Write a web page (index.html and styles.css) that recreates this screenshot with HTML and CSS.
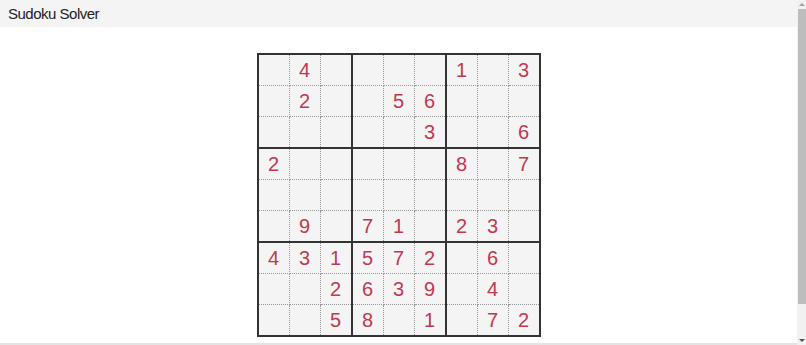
FILE: index.html
```html
<!DOCTYPE html>
<html lang="en">
<head>
	<meta charset="UTF-8">
	<title>Sudoku Solver</title>
	<link rel="stylesheet" href="styles.css">
</head>
<body>
	<div id="header">Sudoku Solver</div>

	<table id="board">
		<tr><td></td><td>4</td><td></td><td></td><td></td><td></td><td>1</td><td></td><td>3</td></tr>
		<tr><td></td><td>2</td><td></td><td></td><td>5</td><td>6</td><td></td><td></td><td></td></tr>
		<tr><td></td><td></td><td></td><td></td><td></td><td>3</td><td></td><td></td><td>6</td></tr>
		<tr><td>2</td><td></td><td></td><td></td><td></td><td></td><td>8</td><td></td><td>7</td></tr>
		<tr><td></td><td></td><td></td><td></td><td></td><td></td><td></td><td></td><td></td></tr>
		<tr><td></td><td>9</td><td></td><td>7</td><td>1</td><td></td><td>2</td><td>3</td><td></td></tr>
		<tr><td>4</td><td>3</td><td>1</td><td>5</td><td>7</td><td>2</td><td></td><td>6</td><td></td></tr>
		<tr><td></td><td></td><td>2</td><td>6</td><td>3</td><td>9</td><td></td><td>4</td><td></td></tr>
		<tr><td></td><td></td><td>5</td><td>8</td><td></td><td>1</td><td></td><td>7</td><td>2</td></tr>
	</table>

	<div id="controls"></div>

	<!-- fake scrollbar, the window shows one -->
	<div id="scrollbar">
		<div class="arrow up"></div>
		<div class="thumb"></div>
		<div class="arrow down"></div>
	</div>
</body>
</html>
```

FILE: styles.css
```css
*{
	padding: 0;
	margin: 0;
}
html{
	scrollbar-width: none;
}
html::-webkit-scrollbar{
	display: none;
}
body{
	margin-right: 9px;
	background-color: white;
	font-family: "Liberation Sans", Arial, sans-serif;
}
#header{
	height: 27px;
	line-height: 28px;
	padding-left: 8px;
	font-size: 15px;
	letter-spacing: -0.5px;
	color: #222;
	background-color: #f4f4f4;
}
#board{
	margin: 26px auto 0;
	border-collapse: collapse;
	border: 2px solid #333;
}
#board td{
	width: 30px;
	height: 30px;
	padding: 0;
	text-align: center;
	font-size: 20px;
	line-height: 30px;
	color: #c0394f;
	background-color: #f4f4f4;
	border: 1px dotted #999;
}
#board td:nth-child(3n){
	border-right: 2px solid #333;
}
#board tr:nth-child(3n) td{
	border-bottom: 2px solid #333;
}
#controls{
	margin-top: 6px;
	height: 60px;
	background-color: #e4e4e4;
}
#scrollbar{
	position: fixed;
	top: 0;
	right: 0;
	width: 9px;
	height: 100%;
	display: flex;
	flex-direction: column;
	background-color: #f1f1f1;
}
#scrollbar .thumb{
	flex: 1;
	margin: 0 0 32px 1px;
	background-color: #bdbdbd;
}
#scrollbar .arrow{
	height: 9px;
	display: flex;
	justify-content: center;
	align-items: center;
}
#scrollbar .arrow::before{
	content: "";
	border-left: 3px solid transparent;
	border-right: 3px solid transparent;
}
#scrollbar .up::before{
	border-bottom: 3px solid #a3a3a3;
}
#scrollbar .down::before{
	border-top: 3px solid #505050;
}
```
